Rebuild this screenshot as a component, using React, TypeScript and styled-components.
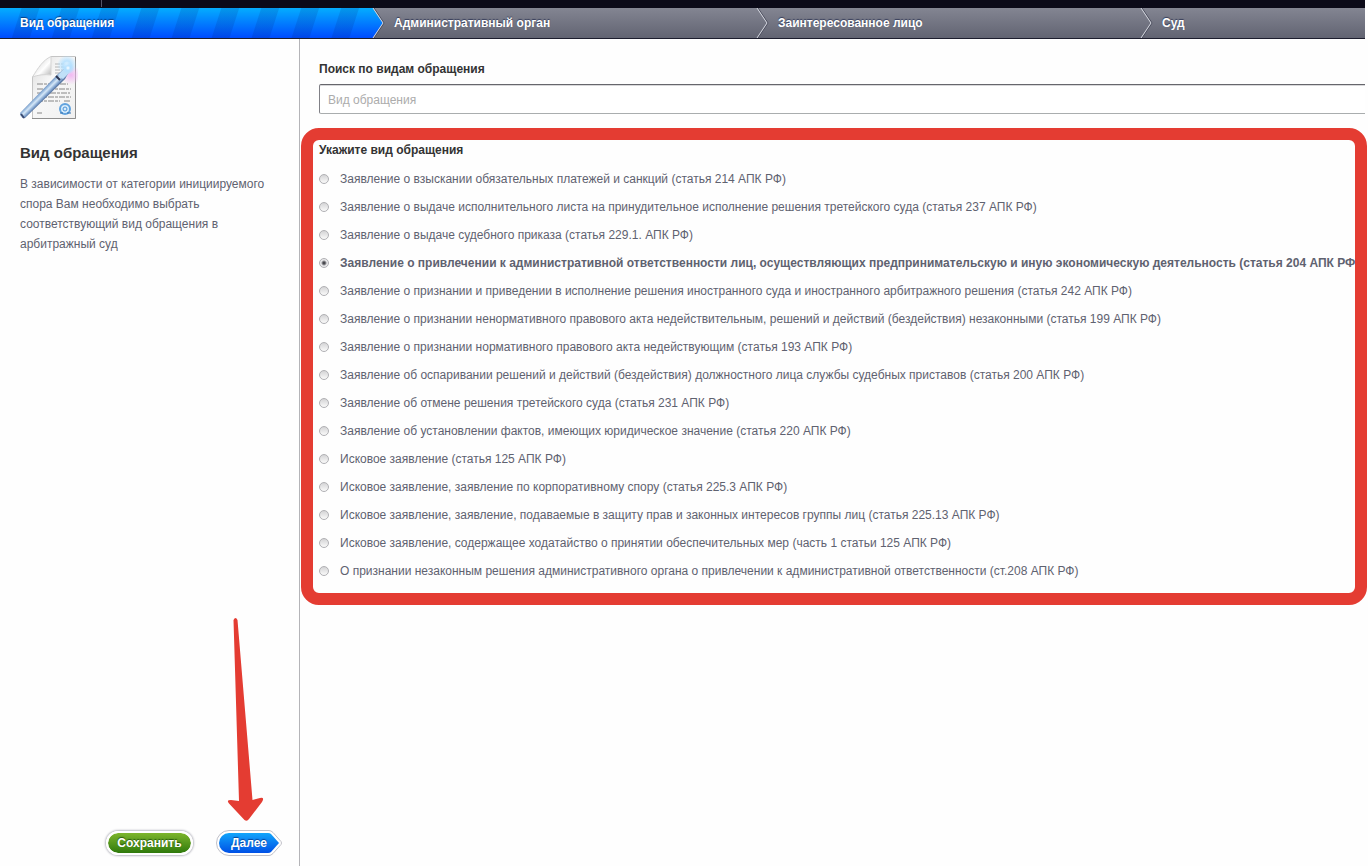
import React, { useState } from "react";
import styled, { createGlobalStyle } from "styled-components";

const GlobalStyle = createGlobalStyle`
  * { box-sizing: border-box; }
  body {
    margin: 0;
    background: #fefefe;
    color: #5f6270;
    font: 12px/20px "Liberation Sans", Arial, sans-serif;
  }
`;

const Page = styled.div`
  display: flex;
  flex-direction: column;
  min-height: 100vh;
  overflow-x: hidden;
`;

const Header = styled.header`
  margin-right: 3px;
`;

const TopBar = styled.div`
  height: 8px;
  background: #0b0a18;
  &::before {
    content: "";
    display: block;
    width: 101px;
    height: 7px;
    border-right: 1px solid #55566a;
  }
`;

const Steps = styled.ol`
  display: grid;
  grid-template-columns: 374fr 384fr 384fr 223fr;
  margin: 0;
  padding: 0;
  list-style: none;
  overflow: hidden;
  border-bottom: 1px solid #1d1e2e;
  background: linear-gradient(#838592, #626472);
`;

const Step = styled.li<{ $active?: boolean }>`
  position: relative;
  display: flex;
  align-items: center;
  height: 30px;
  padding-left: 20px;
  color: #fff;
  font-weight: bold;
  text-shadow: 0 -1px 1px rgba(10, 20, 60, 0.6);
  background: ${(p) =>
    p.$active
      ? `repeating-linear-gradient(108deg, transparent 0 20px, rgba(0, 30, 110, 0.14) 21px 37px, transparent 38px),
         linear-gradient(#04adff, #004cff)`
      : "none"};
`;

const Chevron = styled.svg`
  position: absolute;
  z-index: 1;
  top: 0;
  left: 100%;
  margin-left: -2px;
`;

const Body = styled.div`
  display: flex;
  flex: 1;
`;

const Sidebar = styled.aside`
  display: flex;
  flex: 0 0 300px;
  flex-direction: column;
  padding: 17px 17px 10px 20px;
  border-right: 1px solid #b4b4b8;
`;

const SideTitle = styled.h1`
  margin: 23px 0 11px;
  color: #333;
  font-size: 15px;
  line-height: 20px;
`;

const SideText = styled.p`
  margin: 0;
`;

const Actions = styled.div`
  display: flex;
  align-items: center;
  justify-content: flex-end;
  gap: 23px;
  margin-top: auto;
`;

const SaveButton = styled.button`
  width: 87px;
  height: 24px;
  padding: 0;
  border: 2px solid #fff;
  border-radius: 12px;
  background: linear-gradient(#7db52c, #2f7a0c) padding-box;
  box-shadow: 0 0 2px 1px #bcbcc4;
  color: #fff;
  font: bold 12px/20px "Liberation Sans", Arial, sans-serif;
  text-shadow: 0 -1px 1px rgba(0, 40, 0, 0.6);
  cursor: pointer;
`;

const NextButton = styled.button`
  position: relative;
  width: 66px;
  height: 26px;
  padding: 0;
  border: 0;
  background: none;
  color: #fff;
  font: bold 12px/20px "Liberation Sans", Arial, sans-serif;
  text-shadow: 0 -1px 1px rgba(0, 20, 90, 0.6);
  cursor: pointer;
  span { position: relative; }
`;

const ButtonShape = styled.svg`
  position: absolute;
  top: 0;
  left: 0;
`;

const Pointer = styled.svg`
  position: absolute;
  bottom: 32px;
  left: 9px;
  pointer-events: none;
`;

const Main = styled.main`
  flex: 1;
  min-width: 0;
  padding: 20px 1px 20px;
`;

const Search = styled.div`
  margin: 0 2px 14px 18px;
`;

const Caption = styled.label`
  display: block;
  margin-bottom: 5px;
  color: #333;
  font-weight: bold;
`;

const SearchInput = styled.input`
  display: block;
  width: 100%;
  height: 30px;
  padding: 2px 8px 0;
  border: 1px solid #a9adae;
  border-top-color: #66666c;
  border-left-color: #808086;
  border-right: 0;
  border-radius: 2px 0 0 2px;
  background: #fff;
  box-shadow: inset 0 1px 0 #d8d8da;
  font: 12px "Liberation Sans", Arial, sans-serif;
  &::placeholder { color: #acacac; opacity: 1; }
`;

const Highlight = styled.div`
  overflow: hidden;
  border: 12px solid #e43c32;
  border-radius: 18px;
`;

const Options = styled.fieldset`
  min-width: 0;
  margin: 0;
  padding: 0 0 8px 6px;
  border: 0;
`;

const Legend = styled.legend`
  display: block;
  margin-bottom: 5px;
  padding: 0;
  color: #333;
  font-weight: bold;
`;

const Option = styled.label`
  display: flex;
  align-items: center;
  gap: 11px;
  height: 28px;
  white-space: nowrap;
  &:has(:checked) { font-weight: bold; }
`;

const Radio = styled.input`
  flex: none;
  width: 10px;
  height: 10px;
  margin: 0;
  appearance: none;
  border: 1px solid #b0b0b4;
  border-radius: 50%;
  background: linear-gradient(#d4d4d6, #fafafa);
  &:checked {
    background: radial-gradient(circle, #48484e 0 1px, #e8e8ea 3px);
  }
`;

const steps = ["Вид обращения", "Административный орган", "Заинтересованное лицо", "Суд"];

const kinds = [
  "Заявление о взыскании обязательных платежей и санкций (статья 214 АПК РФ)",
  "Заявление о выдаче исполнительного листа на принудительное исполнение решения третейского суда (статья 237 АПК РФ)",
  "Заявление о выдаче судебного приказа (статья 229.1. АПК РФ)",
  "Заявление о привлечении к административной ответственности лиц, осуществляющих предпринимательскую и иную экономическую деятельность (статья 204 АПК РФ)",
  "Заявление о признании и приведении в исполнение решения иностранного суда и иностранного арбитражного решения (статья 242 АПК РФ)",
  "Заявление о признании ненормативного правового акта недействительным, решений и действий (бездействия) незаконными (статья 199 АПК РФ)",
  "Заявление о признании нормативного правового акта недействующим (статья 193 АПК РФ)",
  "Заявление об оспаривании решений и действий (бездействия) должностного лица службы судебных приставов (статья 200 АПК РФ)",
  "Заявление об отмене решения третейского суда (статья 231 АПК РФ)",
  "Заявление об установлении фактов, имеющих юридическое значение (статья 220 АПК РФ)",
  "Исковое заявление (статья 125 АПК РФ)",
  "Исковое заявление, заявление по корпоративному спору (статья 225.3 АПК РФ)",
  "Исковое заявление, заявление, подаваемые в защиту прав и законных интересов группы лиц (статья 225.13 АПК РФ)",
  "Исковое заявление, содержащее ходатайство о принятии обеспечительных мер (часть 1 статьи 125 АПК РФ)",
  "О признании незаконным решения административного органа о привлечении к административной ответственности (ст.208 АПК РФ)",
];

function DocumentIcon() {
  return (
    <svg width="58" height="64" viewBox="0 0 58 64" aria-hidden="true">
      <defs>
        <linearGradient id="paper" x1="0" y1="0" x2="1" y2="1">
          <stop offset="0" stopColor="#d9d9d9" />
          <stop offset=".4" stopColor="#f8f8f8" />
          <stop offset="1" stopColor="#f0f0f0" />
        </linearGradient>
        <linearGradient id="fold" x1="0" y1="0" x2="1" y2="1">
          <stop offset=".2" stopColor="#d6d6d6" />
          <stop offset=".6" stopColor="#fff" />
          <stop offset="1" stopColor="#b0b0b0" />
        </linearGradient>
        <linearGradient id="wand" gradientUnits="userSpaceOnUse" x1="20" y1="35" x2="27" y2="42">
          <stop offset="0" stopColor="#5b7cab" />
          <stop offset=".2" stopColor="#8fb1d8" />
          <stop offset=".45" stopColor="#d6e8f8" />
          <stop offset=".7" stopColor="#86a8d2" />
          <stop offset="1" stopColor="#34507f" />
        </linearGradient>
        <radialGradient id="glowBlue">
          <stop offset="0" stopColor="#fff" />
          <stop offset=".4" stopColor="#b4e0ff" stopOpacity=".9" />
          <stop offset="1" stopColor="#a9dcff" stopOpacity="0" />
        </radialGradient>
        <radialGradient id="glowPink">
          <stop offset="0" stopColor="#f1b8f2" />
          <stop offset="1" stopColor="#f1b8f2" stopOpacity="0" />
        </radialGradient>
      </defs>
      <path d="M31 .5h24.500v62h-43V21z" fill="url(#paper)" stroke="#c4c4c4" />
      <path d="M55.500 1v61.500H12" fill="none" stroke="#8f8f8f" />
      <path d="M35 8h15M35 11h14M35 14h12M35 17h10" stroke="#b4b4b4" strokeDasharray="5 1" />
      <path d="M12.500 21C18 12 23 4 31 .5V19C25 18 17 19 12.500 21z" fill="url(#fold)" stroke="#d4d4d4" />
      <path d="M17 28h15M40 28h8M17 33h34M17 37h9M30 37h20M17 41h34M17 45h23M44 45h7M17 57h5" stroke="#868686" strokeDasharray="6 1 3 1" />
      <circle cx="45" cy="53" r="5" fill="#d8ecfb" stroke="#62a3de" strokeWidth="2" />
      <circle cx="45" cy="53" r="2" fill="none" stroke="#4a93d8" />
      <path d="M40 57h3M47 57h4" stroke="#2f6fb0" />
      <circle cx="51" cy="19" r="10" fill="url(#glowPink)" />
      <circle cx="47" cy="9" r="10" fill="url(#glowBlue)" />
      <path d="M0 57 38 18l6-5 5 3-4 7L5 62c-2 1-6-2-5-5z" fill="url(#wand)" />
      <path d="M1 58l3 4" stroke="#3a4a70" strokeWidth="2" />
      <path d="m36 20 4 4" stroke="#2a3450" strokeWidth="2" />
      <path d="m38 19 7-7 5 4-7 7z" fill="#c0e0f8" />
      <circle cx="48" cy="12" r="6" fill="url(#glowBlue)" />
    </svg>
  );
}

export default function App() {
  const [selected, setSelected] = useState(3);
  return (
    <Page>
      <GlobalStyle />
      <Header>
        <TopBar />
        <Steps>
          {steps.map((name, i) => (
            <Step key={name} $active={i === 0} aria-current={i === 0 ? "step" : undefined}>
              {name}
              {i < steps.length - 1 && (
                <Chevron width="13" height="30" viewBox="0 0 13 30" aria-hidden="true">
                  {i === 0 && (
                    <>
                      <defs>
                        <linearGradient id="active" x1="0" y1="0" x2="0" y2="1">
                          <stop offset="0" stopColor="#04adff" />
                          <stop offset="1" stopColor="#004cff" />
                        </linearGradient>
                        <linearGradient id="idle" x1="0" y1="0" x2="0" y2="1">
                          <stop offset="0" stopColor="#838592" />
                          <stop offset="1" stopColor="#626472" />
                        </linearGradient>
                      </defs>
                      <path d="M0 0h13v30H0z" fill="url(#idle)" />
                      <path d="M0 0h1l10 15L1 30H0z" fill="url(#active)" />
                    </>
                  )}
                  <path d="M2 0l10 15L2 30" fill="none" stroke="#4a4c5c" />
                  <path d="M1 0l10 15L1 30" fill="none" stroke="#d6d8e0" />
                </Chevron>
              )}
            </Step>
          ))}
        </Steps>
      </Header>
      <Body>
        <Sidebar>
          <DocumentIcon />
          <SideTitle>Вид обращения</SideTitle>
          <SideText>
            В зависимости от категории инициируемого спора Вам необходимо выбрать соответствующий вид обращения в
            арбитражный суд
          </SideText>
          <Actions>
            <SaveButton type="button">Сохранить</SaveButton>
            <NextButton type="button">
              <ButtonShape width="66" height="26" viewBox="0 0 66 26" aria-hidden="true">
                <defs>
                  <linearGradient id="next" x1="0" y1="0" x2="0" y2="1">
                    <stop offset="0" stopColor="#11a5fb" />
                    <stop offset="1" stopColor="#0050e6" />
                  </linearGradient>
                </defs>
                <path d="M13 .5h40q2 0 4 2l8 9q1 1.500 0 3l-8 9q-2 2-4 2H13a12.500 12.500 0 0 1 0-25z" fill="#fff" stroke="#c0c0c8" />
                <path d="M13 3h39q2 0 3 1l8 9-8 9q-1 1-3 1H13a10 10 0 0 1 0-20z" fill="url(#next)" />
              </ButtonShape>
              <span>Далее</span>
              <Pointer width="42" height="210" viewBox="0 0 42 210" aria-hidden="true">
                <path
                  d="M8.500 6Q10.500 2 12.500 6L27.500 186L35 184Q40 183 37 188L24 205Q22 208 19.500 206L4 189.500Q1 186 6 186L14 187z"
                  fill="#e43c32"
                />
              </Pointer>
            </NextButton>
          </Actions>
        </Sidebar>
        <Main>
          <Search>
            <Caption htmlFor="search">Поиск по видам обращения</Caption>
            <SearchInput id="search" type="text" placeholder="Вид обращения" />
          </Search>
          <Highlight>
            <Options>
              <Legend>Укажите вид обращения</Legend>
              {kinds.map((kind, i) => (
                <Option key={kind}>
                  <Radio type="radio" name="kind" checked={selected === i} onChange={() => setSelected(i)} />
                  {kind}
                </Option>
              ))}
            </Options>
          </Highlight>
        </Main>
      </Body>
    </Page>
  );
}
